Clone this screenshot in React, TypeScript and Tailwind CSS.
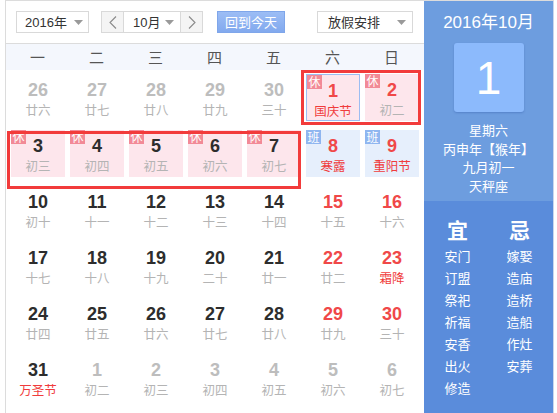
import React from 'react'

type Cell = {
  d: number
  l: string
  other?: boolean
  red?: boolean
  lred?: boolean
  tag?: '休' | '班'
  sel?: boolean
}

const rows: Cell[][] = [
  [
    { d: 26, l: '廿六', other: true },
    { d: 27, l: '廿七', other: true },
    { d: 28, l: '廿八', other: true },
    { d: 29, l: '廿九', other: true },
    { d: 30, l: '三十', other: true },
    { d: 1, l: '国庆节', red: true, lred: true, tag: '休', sel: true },
    { d: 2, l: '初二', red: true, tag: '休' },
  ],
  [
    { d: 3, l: '初三', tag: '休' },
    { d: 4, l: '初四', tag: '休' },
    { d: 5, l: '初五', tag: '休' },
    { d: 6, l: '初六', tag: '休' },
    { d: 7, l: '初七', tag: '休' },
    { d: 8, l: '寒露', red: true, lred: true, tag: '班' },
    { d: 9, l: '重阳节', red: true, lred: true, tag: '班' },
  ],
  [
    { d: 10, l: '初十' },
    { d: 11, l: '十一' },
    { d: 12, l: '十二' },
    { d: 13, l: '十三' },
    { d: 14, l: '十四' },
    { d: 15, l: '十五', red: true },
    { d: 16, l: '十六', red: true },
  ],
  [
    { d: 17, l: '十七' },
    { d: 18, l: '十八' },
    { d: 19, l: '十九' },
    { d: 20, l: '二十' },
    { d: 21, l: '廿一' },
    { d: 22, l: '廿二', red: true },
    { d: 23, l: '霜降', red: true, lred: true },
  ],
  [
    { d: 24, l: '廿四' },
    { d: 25, l: '廿五' },
    { d: 26, l: '廿六' },
    { d: 27, l: '廿七' },
    { d: 28, l: '廿八' },
    { d: 29, l: '廿九', red: true },
    { d: 30, l: '三十', red: true },
  ],
  [
    { d: 31, l: '万圣节', lred: true },
    { d: 1, l: '初二', other: true },
    { d: 2, l: '初三', other: true },
    { d: 3, l: '初四', other: true },
    { d: 4, l: '初五', other: true },
    { d: 5, l: '初六', other: true },
    { d: 6, l: '初七', other: true },
  ],
]

const weekdays = ['一', '二', '三', '四', '五', '六', '日']
const yi = ['安门', '订盟', '祭祀', '祈福', '安香', '出火', '修造']
const ji = ['嫁娶', '造庙', '造桥', '造船', '作灶', '安葬']

const cjk = "font-['Microsoft_YaHei','Noto_Sans_CJK_SC',sans-serif]"
const num = "font-['Liberation_Sans','Arial',sans-serif]"

function Caret() {
  return (
    <svg width="9" height="5" viewBox="0 0 9 5" className="shrink-0">
      <path d="M0 0h9L4.5 5z" fill="#9a9a9a" />
    </svg>
  )
}

function Chevron({ dir }: { dir: 'l' | 'r' }) {
  return (
    <svg width="8" height="13" viewBox="0 0 8 13">
      <path
        d={dir === 'l' ? 'M7 0.5L1 6.5l6 6' : 'M1 0.5l6 6-6 6'}
        fill="none"
        stroke="#8a8a8a"
        strokeWidth="1.1"
      />
    </svg>
  )
}

function DayCell({ c }: { c: Cell }) {
  const box = c.tag === '休' ? 'bg-[#fde6ec]' : c.tag === '班' ? 'bg-[#e6effc]' : ''
  const numColor = c.other ? 'text-[#bdbdbd]' : c.red ? 'text-[#f04848]' : 'text-[#2d2d2d]'
  const lunColor = c.lred ? 'text-[#f03c3c]' : 'text-[#b4b4b4]'
  return (
    <div className="h-[56px] w-[59px] pt-[4px] pl-[3px]">
      <div
        className={`relative flex h-[47px] w-[54px] flex-col items-center pt-[7px] ${box} ${
          c.sel ? 'border border-[#9cbdf2] pt-[6px]' : ''
        }`}
      >
        {c.tag && (
          <span
            className={`absolute left-0 top-0 flex h-[14px] w-[15px] items-center justify-center text-[12px] leading-none text-white ${cjk} ${
              c.tag === '休' ? 'bg-[#f28a97]' : 'bg-[#8fb6f0]'
            } ${c.sel ? '-left-px -top-px' : ''}`}
          >
            {c.tag}
          </span>
        )}
        <span className={`text-[18px] font-bold leading-[19px] ${num} ${numColor}`}>{c.d}</span>
        <span className={`mt-[2px] text-[12.5px] leading-[15px] ${cjk} ${lunColor}`}>{c.l}</span>
      </div>
    </div>
  )
}

export default function App() {
  return (
    <div className={`h-[413px] w-[557px] overflow-hidden bg-white pl-[5px] ${cjk}`}>
      <div className="flex h-full w-[549px] border-l border-t border-[#dcdcdc]">
        {/* calendar */}
        <div className="flex w-[418px] flex-col">
          <div className="flex h-[43px] items-center border-b border-[#dcdcdc] pl-[10px]">
            <div className="flex h-[22px] w-[73px] items-center justify-between border border-[#d9d9d9] pl-[8px] pr-[5px] text-[13px] text-[#333]">
              <span>
                <span className={num}>2016</span>年
              </span>
              <Caret />
            </div>
            <div className="ml-[12px] flex h-[22px] w-[102px] border border-[#d9d9d9] text-[13px] text-[#333]">
              <div className="flex w-[22px] items-center justify-center border-r border-[#d9d9d9] bg-[#f4f4f4]">
                <Chevron dir="l" />
              </div>
              <div className="flex flex-1 items-center justify-between pl-[9px] pr-[6px]">
                <span>
                  <span className={num}>10</span>月
                </span>
                <Caret />
              </div>
              <div className="flex w-[22px] items-center justify-center border-l border-[#d9d9d9] bg-[#f4f4f4]">
                <Chevron dir="r" />
              </div>
            </div>
            <div className="ml-[14px] flex h-[22px] w-[68px] items-center justify-center border border-[#7fa6ea] bg-gradient-to-b from-[#9cbdf5] to-[#82a9ee] text-[13px] text-white">
              回到今天
            </div>
            <div className="ml-[32px] flex h-[22px] w-[96px] items-center justify-between border border-[#d9d9d9] pl-[10px] pr-[6px] text-[13px] text-[#333]">
              <span>放假安排</span>
              <Caret />
            </div>
          </div>

          <div className="grid h-[26px] grid-cols-[repeat(7,59px)] items-center bg-[#f4f7fd] pl-[2px] text-[15px] text-[#555]">
            {weekdays.map((w) => (
              <span key={w} className="text-center">
                {w}
              </span>
            ))}
          </div>

          <div className="relative pl-[2px]">
            <div className="grid grid-cols-[repeat(7,59px)]">
              {rows.flat().map((c, i) => (
                <DayCell key={i} c={c} />
              ))}
            </div>
            {/* highlight frames */}
            <div className="pointer-events-none absolute left-[295px] top-0 h-[55px] w-[120px] border-[3px] border-[#f23b3b]" />
            <div className="pointer-events-none absolute left-[1px] top-[61px] h-[58px] w-[294px] border-[3px] border-[#f23b3b]" />
          </div>
        </div>

        {/* side panel */}
        <div className="flex w-[129px] flex-col text-white">
          <div className="flex h-[200px] flex-col items-center bg-[#6d9ddf]">
            <div className="mt-[9px] text-[17px] leading-[22px]">
              <span className={num}>2016</span>年<span className={num}>10</span>月
            </div>
            <div
              className={`mt-[9px] flex h-[69px] w-[70px] items-center justify-center rounded-[3px] bg-[#8cbafc] text-[46px] leading-none shadow-[0_1px_2px_rgba(40,80,160,0.35)] ${num}`}
            >
              1
            </div>
            <div className="mt-[9px] flex flex-col items-center text-[13px] leading-[18.5px]">
              <span>星期六</span>
              <span>丙申年【猴年】</span>
              <span>九月初一</span>
              <span>天秤座</span>
            </div>
          </div>
          <div className="flex flex-1 justify-center gap-[36px] bg-[#5a8cdb] pt-[16px]">
            <div className="flex flex-col items-center">
              <span className="mb-[4px] text-[21px] font-bold leading-[24px]">宜</span>
              {yi.map((t) => (
                <span key={t} className="text-[13px] leading-[22px]">
                  {t}
                </span>
              ))}
            </div>
            <div className="flex flex-col items-center">
              <span className="mb-[4px] text-[21px] font-bold leading-[24px]">忌</span>
              {ji.map((t) => (
                <span key={t} className="text-[13px] leading-[22px]">
                  {t}
                </span>
              ))}
            </div>
          </div>
        </div>
        <div className="w-px bg-[#c9d6ec]" />
      </div>
    </div>
  )
}
